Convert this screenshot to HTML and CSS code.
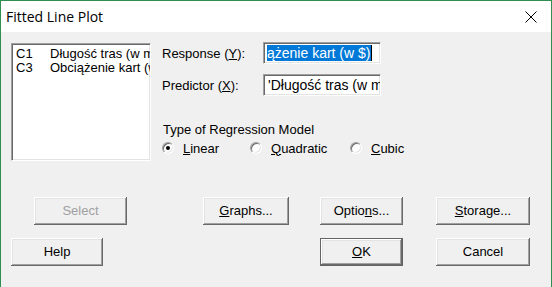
FILE: index.html
```html
<!DOCTYPE html>
<html>
<head>
<meta charset="utf-8">
<link rel="stylesheet" href="styles.css">
</head>
<body>
<div class="window">
  <div class="titlebar">
    <span class="title">Fitted Line Plot</span>
    <svg class="close" width="12" height="12" viewBox="0 0 12 12"><path d="M0.5 0.5 L11.5 11.5 M11.5 0.5 L0.5 11.5" stroke="#000" stroke-width="1" fill="none"/></svg>
  </div>
  <div class="body">
    <div class="top">
      <div class="listbox">
        <div class="item"><span class="col">C1</span><span class="name">Długość tras (w milach)</span></div>
        <div class="item"><span class="col">C3</span><span class="name">Obciążenie kart (w $)</span></div>
      </div>
      <div class="form">
        <div class="field">
          <span class="label">Response (<u>Y</u>):</span>
          <div class="textbox"><span class="sel">ążenie kart (w $)</span><span class="caret"></span></div>
        </div>
        <div class="field">
          <span class="label">Predictor (<u>X</u>):</span>
          <div class="textbox"><span class="val">'Długość tras (w milach)'</span></div>
        </div>
        <div class="group">
          <div class="group-title">Type of Regression Model</div>
          <div class="radios">
            <label class="radio r-linear"><span class="dot checked"></span><span><u>L</u>inear</span></label>
            <label class="radio r-quad"><span class="dot"></span><span><u>Q</u>uadratic</span></label>
            <label class="radio r-cubic"><span class="dot"></span><span><u>C</u>ubic</span></label>
          </div>
        </div>
      </div>
    </div>
    <div class="btnrow row1">
      <div class="btn disabled b-select">Select</div>
      <div class="btn b-graphs"><u>G</u>raphs...</div>
      <div class="btn b-options">Optio<u>n</u>s...</div>
      <div class="btn b-storage"><u>S</u>torage...</div>
    </div>
    <div class="btnrow row2">
      <div class="btn b-help">Help</div>
      <div class="btn default b-ok"><u>O</u>K</div>
      <div class="btn b-cancel">Cancel</div>
    </div>
  </div>
</div>
</body>
</html>
```

FILE: styles.css
```css
* { box-sizing: border-box; }
html, body { margin: 0; padding: 0; }
body { width: 552px; height: 287px; overflow: hidden; background: #f0f0f0; }

.window {
  width: 552px;
  height: 287px;
  border: 1px solid #2f8f4e;
  border-bottom: none;
  background: #f0f0f0;
  font-family: "Liberation Sans", Arial, sans-serif;
  font-size: 13px;
  color: #000;
}

.titlebar {
  height: 31px;
  background: #fff;
  display: flex;
  align-items: center;
  padding-left: 5px;
  padding-right: 14px;
}
.title {
  font-family: "Open Sans", "Noto Sans", sans-serif;
  font-size: 14px;
  color: #000;
  flex: 1;
  padding-bottom: 1px;
}
.close { display: block; margin-top: 1px; }

.body { padding: 11px 0 0 10px; }

.top { display: flex; align-items: flex-start; height: 118px; }

.listbox {
  width: 140px;
  height: 118px;
  background: #fff;
  border: 1px solid;
  border-color: #a0a0a0 #fff #fff #a0a0a0;
  box-shadow: inset 1px 1px #696969, inset -1px -1px #e3e3e3;
  padding: 3px 0 0 4px;
  overflow: hidden;
}
.item { display: flex; white-space: nowrap; height: 14px; line-height: 14px; }
.col { width: 34px; flex: none; }
.name { flex: none; }

.form { margin-left: 11px; }

.field { display: flex; align-items: center; height: 22px; margin-bottom: 10px; }
.field:first-child { margin-top: -1px; }
.label { width: 101px; flex: none; }

.textbox {
  width: 118px;
  height: 22px;
  background: #fff;
  border: 1px solid;
  border-color: #a0a0a0 #fff #fff #a0a0a0;
  box-shadow: inset 1px 1px #696969, inset -1px -1px #e3e3e3;
  padding: 2px 0 0 3px;
  overflow: hidden;
  white-space: nowrap;
  display: flex;
  align-items: flex-start;
  font-size: 14px;
}
.sel { background: #0078d7; color: #fff; line-height: 16px; padding-right: 1px; }
.caret { width: 1px; height: 16px; background: #000; }
.val { line-height: 16px; padding-left: 1px; }

.group { margin-top: 26px; padding-left: 1px; }
.group-title { line-height: 15px; }
.radios { display: flex; align-items: center; margin-top: 3px; height: 16px; }
.radio { display: flex; align-items: center; }
.dot {
  width: 12px; height: 12px;
  border-radius: 50%;
  background: #fff;
  border: 1px solid;
  border-color: #a0a0a0 #fff #fff #a0a0a0;
  box-shadow: inset 1px 1px #696969, inset -1px -1px #e3e3e3;
  margin-right: 9px;
  position: relative;
  flex: none;
}
.dot.checked::after {
  content: "";
  position: absolute;
  left: 3px; top: 3px;
  width: 4px; height: 4px;
  border-radius: 50%;
  background: #000;
}
.r-linear { width: 88px; margin-left: -1px; }
.r-quad { width: 100px; }

.btnrow { display: flex; }
.row1 { margin-top: 36px; padding-left: 23px; }
.row2 { margin-top: 13px; padding-left: 0; }

.btn {
  height: 28px;
  background: #f0f0f0;
  box-shadow: inset -1px -1px #696969, inset 1px 1px #fff, inset -2px -2px #a0a0a0, inset 2px 2px #e3e3e3;
  display: flex;
  align-items: center;
  justify-content: center;
  padding-bottom: 1px;
}
.btn.disabled { color: #a0a0a0; }
.btn.default {
  border: 1px solid #646464;
}
.b-select { width: 93px; }
.b-graphs { width: 86px; margin-left: 76px; }
.b-options { width: 83px; margin-left: 31px; }
.b-storage { width: 94px; margin-left: 33px; }
.b-help { width: 92px; }
.b-ok { width: 83px; margin-left: 217px; }
.b-cancel { width: 94px; margin-left: 33px; }
```
